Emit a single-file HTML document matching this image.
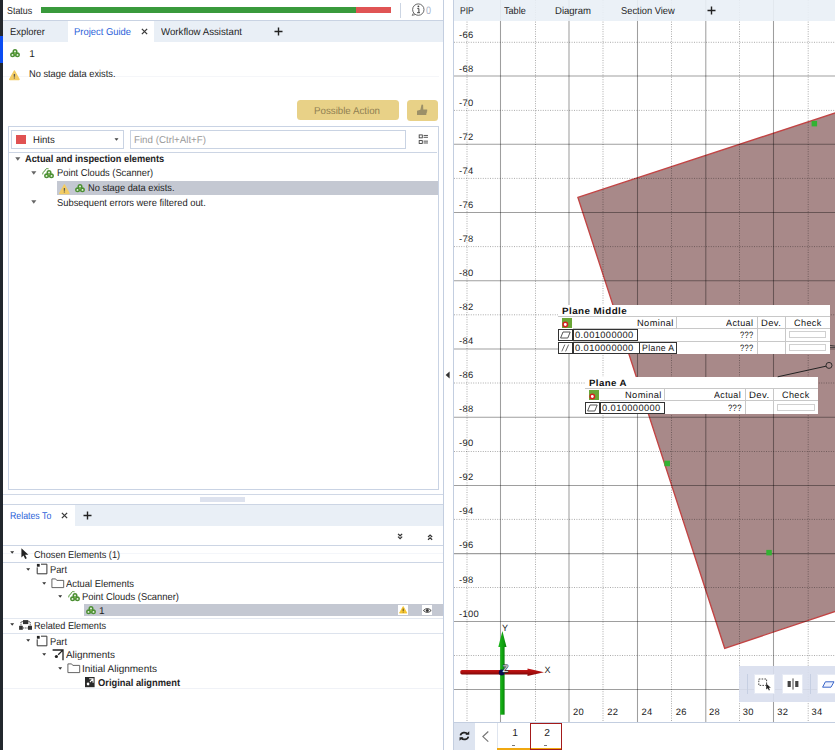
<!DOCTYPE html>
<html>
<head>
<meta charset="utf-8">
<style>
html,body{margin:0;padding:0;}
body{width:835px;height:750px;overflow:hidden;background:#fff;position:relative;font-family:"Liberation Sans",sans-serif;font-size:10px;color:#1e1e1e;text-rendering:geometricPrecision;}
.a{position:absolute;}
.t{position:absolute;white-space:nowrap;line-height:14px;height:14px;margin-top:1px;z-index:2;}
.hl{position:absolute;height:1px;}
.vl{position:absolute;width:1px;}
.b{font-weight:bold;}
.blue{color:#2b62d9;}
svg{position:absolute;overflow:visible;z-index:2;}
.lab{position:absolute;white-space:nowrap;margin-top:1px;letter-spacing:0.3px;font-size:9.4px;line-height:12px;height:12px;color:#1a1a1a;}
.an{position:absolute;white-space:nowrap;font-size:9.2px;line-height:12px;height:12px;color:#111;letter-spacing:0.4px;}
</style>
</head>
<body>
<svg width="0" height="0" style="left:0;top:0;"><defs>
<g id="cl"><g fill="#4b8f33"><circle cx="5" cy="2.6" r="2.5"/><circle cx="2.6" cy="5.8" r="2.5"/><circle cx="7.4" cy="5.8" r="2.5"/></g><g fill="#eef6e6"><circle cx="5" cy="2.5" r="0.95"/><circle cx="2.5" cy="5.9" r="0.95"/><circle cx="7.5" cy="5.9" r="0.95"/></g><circle cx="5" cy="4.7" r="0.8" fill="#86c04e"/></g>
<g id="warn"><path d="M5.4 1 L10 9.4 H0.8 Z" fill="#f3cc63" stroke="#f3cc63" stroke-width="1.5" stroke-linejoin="round"/><path d="M5.4 3.9 V6.7 M5.4 7.4 V8.4" stroke="#5e5a50" stroke-width="1.3"/></g>
</defs></svg>
<!-- LEFT EDGE STRIP -->
<div class="a" style="left:0;top:0;width:2.7px;height:750px;background:#22272d;"></div>
<div class="a" style="left:0;top:36.4px;width:2.7px;height:27px;background:#0a4cf2;"></div>

<!-- STATUS ROW -->
<div class="t" id="tStatus" style="left:7.4px;top:4px;transform-origin:0 50%;transform:scaleX(0.889);">Status</div>
<div class="a" style="left:41px;top:7px;width:314.6px;height:5.9px;background:#399a3c;"></div>
<div class="a" style="left:355.6px;top:7px;width:35.4px;height:5.9px;background:#e05454;"></div>
<div class="vl" style="left:400px;top:3px;height:15px;background:#ccd5e3;"></div>
<svg style="left:410px;top:2px;" width="18" height="16" viewBox="0 0 18 16"><circle cx="8.3" cy="7.6" r="5.7" fill="#fff" stroke="#555" stroke-width="0.9"/><path d="M3.4 11.2 L2.2 13.4 L5 12.6" fill="#fff" stroke="#555" stroke-width="0.8"/><circle cx="8.4" cy="4.4" r="0.9" fill="#444"/><path d="M7.3 6.6 H8.9 V10.6 M7.1 10.7 H10" fill="none" stroke="#444" stroke-width="1"/></svg>
<div class="t" style="left:426.3px;top:3px;color:#a9b3c8;font-size:10.6px;transform:scaleX(0.85);transform-origin:0 50%;">0</div>
<div class="hl" style="left:3px;top:20px;width:441px;background:#c9d3e3;"></div>

<!-- TOP TAB STRIP -->
<div class="a" style="left:3px;top:21px;width:440px;height:21px;background:#e9eff6;"></div>
<div class="a" style="left:67.6px;top:21px;width:86.9px;height:21px;background:#fff;"></div>
<div class="t" id="tExplorer" style="left:9.5px;top:25px;transform-origin:0 50%;transform:scaleX(0.937);">Explorer</div>
<div class="t blue" id="tPG" style="left:74px;top:25px;transform-origin:0 50%;transform:scaleX(0.941);">Project Guide</div>
<svg style="left:140.6px;top:28.2px;" width="7" height="7" viewBox="0 0 8 8"><path d="M1 1 L7 7 M7 1 L1 7" stroke="#3a3a3a" stroke-width="1.5" fill="none"/></svg>
<div class="t" id="tWA" style="left:161px;top:25px;transform-origin:0 50%;transform:scaleX(0.967);">Workflow Assistant</div>
<svg style="left:274px;top:27px;" width="9" height="9" viewBox="0 0 9 9"><path d="M4.5 0.5 V8.5 M0.5 4.5 H8.5" stroke="#222" stroke-width="1.4" fill="none"/></svg>

<!-- PROJECT GUIDE CONTENT -->
<svg class="cl" style="left:10.2px;top:48.5px;" width="11" height="9"><use href="#cl"/></svg>
<div class="t" style="left:29.3px;top:47px;">1</div>
<svg class="wn" style="left:9px;top:69.7px;" width="11" height="11"><use href="#warn"/></svg>
<div class="t" id="tNo1" style="left:29px;top:67px;transform-origin:0 50%;transform:scaleX(0.926);">No stage data exists.</div>
<div class="hl" style="left:3px;top:76px;width:436px;background:#f5f6f9;"></div>

<!-- BUTTONS -->
<div class="a" style="left:296.6px;top:100px;width:102.6px;height:20px;border-radius:3.5px;background:#e8d187;"></div>
<div class="t" id="tPA" style="left:314px;top:104px;color:#8f7f52;transform-origin:0 50%;transform:scaleX(0.973);">Possible Action</div>
<div class="a" style="left:407.4px;top:100px;width:30.7px;height:21px;border-radius:3.5px;background:#e8d187;"></div>
<svg style="left:410px;top:100px;" width="24" height="20" viewBox="410 100 24 20"><path d="M417 110.8 L420.4 109.7 L421.5 104.8 Q422.3 104.3 423.1 104.9 L423.3 109.4 H427.2 V111.5 H426.8 V113.2 H426.3 V114.9 H417 Z" fill="#9c9068"/></svg>

<!-- HINTS FRAME -->
<div class="a" style="left:8px;top:126px;width:430.6px;height:363.6px;border:1px solid #c9d3e4;box-sizing:border-box;"></div>
<div class="a" style="left:11px;top:130px;width:113px;height:19px;border:1px solid #c9d3e3;box-sizing:border-box;"></div>
<div class="a" style="left:16px;top:135px;width:10px;height:9px;background:#e05252;"></div>
<div class="t" id="tHints" style="left:32.7px;top:133px;transform-origin:0 50%;transform:scaleX(0.956);">Hints</div>
<svg style="left:114.3px;top:137.5px;" width="5" height="3" viewBox="0 0 6 4"><path d="M0.3 0.3 H5.7 L3 3.6 Z" fill="#444"/></svg>
<div class="a" style="left:130px;top:130px;width:276px;height:19px;border:1px solid #c9d3e3;box-sizing:border-box;"></div>
<div class="t" id="tFind" style="left:134px;top:133px;color:#9a9a9a;transform-origin:0 50%;transform:scaleX(0.974);">Find (Ctrl+Alt+F)</div>
<svg style="left:418.4px;top:134.2px;" width="11.5" height="11" viewBox="0 0 12 12"><g fill="none" stroke="#333" stroke-width="0.9"><rect x="1" y="1" width="3.4" height="3.2"/><rect x="1" y="7.2" width="3.4" height="3.2"/><path d="M5.8 1.6 H10.6 M5.8 3.6 H10.6 M5.8 7.8 H10.6 M5.8 9.8 H10.6"/></g></svg>
<div class="hl" style="left:9px;top:152px;width:428px;background:#ccd5e4;"></div>

<!-- HINTS TREE -->
<svg style="left:15px;top:156.8px;" width="5.6" height="4" viewBox="0 0 7 5"><path d="M0.3 0.3 H6.7 L3.5 4.6 Z" fill="#666"/></svg>
<div class="t b" id="tAct" style="left:25px;top:152px;transform-origin:0 50%;transform:scaleX(0.928);">Actual and inspection elements</div>
<svg style="left:30.6px;top:171px;" width="5.6" height="4" viewBox="0 0 7 5"><path d="M0.3 0.3 H6.7 L3.5 4.6 Z" fill="#666"/></svg>
<svg class="cl" style="left:44px;top:170px;" width="11" height="9"><use href="#cl"/><path d="M-1.3 4.4 A3 3 0 0 1 0.8 1.1 A3 3 0 0 1 4.6 -1.2" fill="none" stroke="#5a9a40" stroke-width="1"/></svg>
<div class="t" id="tPC1" style="left:57.4px;top:166px;transform-origin:0 50%;transform:scaleX(0.930);">Point Clouds (Scanner)</div>
<div class="a" style="left:57.3px;top:181px;width:380.7px;height:13.7px;background:#c4c8d2;"></div>
<svg class="wn" style="left:58.8px;top:183.5px;" width="11" height="11"><use href="#warn"/></svg>
<svg class="cl" style="left:74.7px;top:183.6px;" width="11" height="9"><use href="#cl"/></svg>
<div class="t" id="tNo2" style="left:87.7px;top:181px;transform-origin:0 50%;transform:scaleX(0.926);">No stage data exists.</div>
<svg style="left:30.6px;top:199.8px;" width="5.6" height="4" viewBox="0 0 7 5"><path d="M0.3 0.3 H6.7 L3.5 4.6 Z" fill="#666"/></svg>
<div class="t" id="tSub" style="left:57.2px;top:196px;transform-origin:0 50%;transform:scaleX(0.936);">Subsequent errors were filtered out.</div>

<!-- SPLITTER -->
<div class="hl" style="left:3px;top:494px;width:441px;background:#d0d8e6;"></div>
<div class="a" style="left:200px;top:497px;width:45px;height:5px;background:#dde2ee;"></div>
<div class="hl" style="left:3px;top:504px;width:441px;background:#ccd5e4;"></div>

<!-- RELATES TO -->
<div class="a" style="left:3px;top:505px;width:440px;height:21px;background:#e9eff6;"></div>
<div class="a" style="left:3px;top:505px;width:72px;height:21px;background:#fff;"></div>
<div class="t blue" id="tRel" style="left:9.7px;top:509px;transform-origin:0 50%;transform:scaleX(0.877);">Relates To</div>
<svg style="left:61.2px;top:512.2px;" width="7" height="7" viewBox="0 0 8 8"><path d="M1 1 L7 7 M7 1 L1 7" stroke="#3a3a3a" stroke-width="1.5" fill="none"/></svg>
<svg style="left:83px;top:511px;" width="9" height="9" viewBox="0 0 9 9"><path d="M4.5 0.5 V8.5 M0.5 4.5 H8.5" stroke="#222" stroke-width="1.4" fill="none"/></svg>
<svg style="left:397.2px;top:533px;" width="6.2" height="6.6" viewBox="0 0 7 8"><path d="M1 1 L3.5 3.4 L6 1 M1 4.4 L3.5 6.8 L6 4.4" stroke="#333" stroke-width="1.5" fill="none"/></svg>
<svg style="left:427.1px;top:533.6px;" width="6.2" height="6.6" viewBox="0 0 7 8"><path d="M1 3.6 L3.5 1.2 L6 3.6 M1 7 L3.5 4.6 L6 7" stroke="#333" stroke-width="1.5" fill="none"/></svg>
<div class="hl" style="left:3px;top:545px;width:440px;background:#ccd5e4;"></div>
<div class="hl" style="left:3px;top:553px;width:440px;background:#f4f6fa;"></div><div class="hl" style="left:3px;top:561.8px;width:440px;background:#cdd6e5;"></div>
<div class="hl" style="left:3px;top:617.5px;width:440px;background:#e3e8f0;"></div>
<div class="hl" style="left:3px;top:632.5px;width:440px;background:#dde3ed;"></div>
<div class="hl" style="left:3px;top:688px;width:440px;background:#f0f2f7;"></div>

<!-- relates tree -->
<svg style="left:9.6px;top:550.5px;" width="4.4" height="2.8" viewBox="0 0 6 4"><path d="M0.2 0.2 H5.8 L3 3.8 Z" fill="#333"/></svg>
<svg style="left:21.4px;top:547.8px;" width="8" height="11.2" viewBox="0 0 8 11.2"><path d="M0.4 0.2 V9.4 L2.5 7.4 L4.2 11 L5.8 10.3 L4.1 6.8 H7.4 Z" fill="#222"/></svg>
<div class="t" id="tCh" style="left:34px;top:548px;transform-origin:0 50%;transform:scaleX(0.916);">Chosen Elements (1)</div>
<svg style="left:25.7px;top:567.6px;" width="4.4" height="2.8" viewBox="0 0 6 4"><path d="M0.2 0.2 H5.8 L3 3.8 Z" fill="#333"/></svg><svg style="left:35.5px;top:563.2px;" width="12" height="12" viewBox="0 0 12 12"><path d="M1.2 4.4 V10.8 H10.9 V1.2 H5" fill="none" stroke="#333" stroke-width="1"/><rect x="0.9" y="0.9" width="2.8" height="2.8" fill="#222"/></svg>
<div class="t" id="tPart1" style="left:50px;top:563px;transform-origin:0 50%;transform:scaleX(0.927);">Part</div>
<svg style="left:41.6px;top:581.5px;" width="4.4" height="2.8" viewBox="0 0 6 4"><path d="M0.2 0.2 H5.8 L3 3.8 Z" fill="#333"/></svg><svg style="left:50.9px;top:578.2px;" width="14" height="11" viewBox="0 0 14 11"><path d="M0.9 0.9 H4.6 L5.8 2.4 H12.7 V9.6 H0.9 Z" fill="#fff" stroke="#555" stroke-width="0.9"/></svg>
<div class="t" id="tAE" style="left:66px;top:577px;transform-origin:0 50%;transform:scaleX(0.941);">Actual Elements</div>
<svg style="left:57.7px;top:595px;" width="4.4" height="2.8" viewBox="0 0 6 4"><path d="M0.2 0.2 H5.8 L3 3.8 Z" fill="#333"/></svg>
<svg class="cl" style="left:69.9px;top:592.8px;" width="11" height="9"><use href="#cl"/><path d="M-1.3 4.4 A3 3 0 0 1 0.8 1.1 A3 3 0 0 1 4.6 -1.2" fill="none" stroke="#5a9a40" stroke-width="1"/></svg>
<div class="t" id="tPC2" style="left:82px;top:590px;transform-origin:0 50%;transform:scaleX(0.938);">Point Clouds (Scanner)</div>
<div class="a" style="left:83.6px;top:603.9px;width:359.4px;height:12.6px;background:#c4c8d2;"></div>
<svg class="cl" style="left:85.9px;top:605.7px;" width="11" height="9"><use href="#cl"/></svg>
<div class="t" style="left:99px;top:604px;">1</div>
<div class="a" style="left:397.7px;top:604.7px;width:10.5px;height:10.4px;background:#fff;"></div>
<svg style="left:398.7px;top:606.3px;" width="8.4" height="7.6" viewBox="0 0 8.4 7.6"><path d="M4.2 0.5 L7.9 7.1 H0.5 Z" fill="#f5c532" stroke="#f5c532" stroke-width="0.8" stroke-linejoin="round"/><path d="M4.2 2.6 V5 M4.2 5.7 V6.5" stroke="#5a4a20" stroke-width="1"/></svg>
<div class="a" style="left:422px;top:604.7px;width:10.1px;height:10.4px;background:#fff;"></div>
<svg style="left:422.8px;top:607.6px;" width="8.6" height="5" viewBox="0 0 8.6 5"><path d="M0.4 2.5 Q4.3 -1.4 8.2 2.5 Q4.3 6.4 0.4 2.5 Z" fill="#fff" stroke="#333" stroke-width="0.9"/><circle cx="4.3" cy="2.5" r="1.5" fill="#333"/></svg>
<svg style="left:9.6px;top:622.8px;" width="4.4" height="2.8" viewBox="0 0 6 4"><path d="M0.2 0.2 H5.8 L3 3.8 Z" fill="#333"/></svg>
<svg style="left:19px;top:620.4px;" width="13.2" height="10" viewBox="0 0 13.2 10"><g fill="#333"><rect x="4" y="0.1" width="5.3" height="4"/><rect x="0.1" y="5.8" width="3.7" height="4"/><rect x="9" y="5.8" width="4" height="4"/></g><path d="M3.8 1.6 H2 V5.6 M9.4 1.6 H11.2 V5.6 M4 8 H9" stroke="#333" stroke-width="0.9" fill="none" stroke-dasharray="1.3 0.9"/></svg>
<div class="t" id="tRE" style="left:34px;top:619px;transform-origin:0 50%;transform:scaleX(0.912);">Related Elements</div>
<svg style="left:25.7px;top:639.4px;" width="4.4" height="2.8" viewBox="0 0 6 4"><path d="M0.2 0.2 H5.8 L3 3.8 Z" fill="#333"/></svg><svg style="left:35.5px;top:634.6px;" width="12" height="12" viewBox="0 0 12 12"><path d="M1.2 4.4 V10.8 H10.9 V1.2 H5" fill="none" stroke="#333" stroke-width="1"/><rect x="0.9" y="0.9" width="2.8" height="2.8" fill="#222"/></svg>
<div class="t" id="tPart2" style="left:50px;top:635px;transform-origin:0 50%;transform:scaleX(0.927);">Part</div>
<svg style="left:41.6px;top:652.9px;" width="4.4" height="2.8" viewBox="0 0 6 4"><path d="M0.2 0.2 H5.8 L3 3.8 Z" fill="#333"/></svg>
<svg style="left:52px;top:648.6px;" width="12" height="12" viewBox="0 0 12 12"><path d="M0.6 1 H11 V11.2 M10.6 1.4 L6.2 5.8" fill="none" stroke="#222" stroke-width="1.3"/><circle cx="4.4" cy="7.5" r="1.6" fill="#222"/></svg>
<div class="t" id="tAl" style="left:66px;top:648px;transform-origin:0 50%;transform:scaleX(0.991);">Alignments</div>
<svg style="left:57.7px;top:667px;" width="4.4" height="2.8" viewBox="0 0 6 4"><path d="M0.2 0.2 H5.8 L3 3.8 Z" fill="#333"/></svg><svg style="left:67.1px;top:662.8px;" width="14" height="11" viewBox="0 0 14 11"><path d="M0.9 0.9 H4.6 L5.8 2.4 H12.7 V9.6 H0.9 Z" fill="#fff" stroke="#555" stroke-width="0.9"/></svg>
<div class="t" id="tIA" style="left:82px;top:662px;transform-origin:0 50%;transform:scaleX(0.999);">Initial Alignments</div>
<svg style="left:85.3px;top:676.6px;" width="9.6" height="10.2" viewBox="0 0 10 10" preserveAspectRatio="none"><rect x="0" y="0" width="10" height="10" fill="#2a2a2a"/><path d="M4.4 1.7 H8.4 V5.6 M8.2 1.9 L5.2 4.9" stroke="#fff" stroke-width="1.1" fill="none"/><circle cx="3.2" cy="6.9" r="1.4" fill="#fff"/></svg>
<div class="t b" id="tOA" style="left:98px;top:676px;transform-origin:0 50%;transform:scaleX(0.934);">Original alignment</div>

<!-- PANEL BORDERS -->
<div class="vl" style="left:443px;top:0;height:750px;background:#c3cee0;"></div>
<svg style="left:445px;top:371px;" width="5" height="8" viewBox="0 0 5 8"><path d="M4.6 0.4 V7.6 L0.6 4 Z" fill="#333"/></svg>
<div class="vl" style="left:453px;top:0;height:750px;background:#c3cee0;"></div>

<!-- VIEWPORT -->
<div id="vp" class="a" style="left:454px;top:0;width:381px;height:722px;overflow:hidden;background:#fff;">
<svg id="vpsvg" style="left:0;top:0;z-index:0;" width="381" height="722" viewBox="454 0 381 722">
<polygon points="577.9,197.4 836.5,112.5 836.5,611 724.7,648.3" fill="#a88989" stroke="#c24444" stroke-width="1.35"/>
<g id="grid"><g stroke="#000" stroke-opacity="0.38" stroke-width="1.05"><path d="M500.5 0 V722"/><path d="M569.0 0 V722"/><path d="M637.5 0 V722"/><path d="M705.8 0 V722"/><path d="M773.5 0 V722"/><path d="M454 76.0 H835"/><path d="M454 144.3 H835"/><path d="M454 212.5 H835"/><path d="M454 280.7 H835"/><path d="M454 348.9 H835"/><path d="M454 417.2 H835"/><path d="M454 485.4 H835"/><path d="M454 553.6 H835"/><path d="M454 621.4 H835"/><path d="M454 689.5 H835"/></g><g stroke="#000" stroke-opacity="0.33" stroke-width="1" stroke-dasharray="1 1.4"><path d="M467.0 0 V722"/><path d="M535.5 0 V722"/><path d="M603.0 0 V722"/><path d="M671.5 0 V722"/><path d="M739.5 0 V722"/><path d="M808.2 0 V722"/><path d="M454 42.3 H835"/><path d="M454 110.4 H835"/><path d="M454 178.4 H835"/><path d="M454 246.6 H835"/><path d="M454 314.8 H835"/><path d="M454 383.0 H835"/><path d="M454 451.5 H835"/><path d="M454 519.4 H835"/><path d="M454 587.5 H835"/><path d="M454 655.5 H835"/></g></g><!--/grid--><g fill="#33b233" id="gsq"><rect x="811.6" y="120.9" width="5.5" height="5.5"/><rect x="664.4" y="460.7" width="5.6" height="5.5"/><rect x="766.3" y="549.9" width="5.5" height="5.5"/></g>
</svg>
</div>

<!--labs--><div class="lab" id="ly0" style="left:459px;top:28px;">-66</div>
<div class="lab" id="ly1" style="left:459px;top:62px;">-68</div>
<div class="lab" id="ly2" style="left:459px;top:96px;">-70</div>
<div class="lab" id="ly3" style="left:459px;top:130px;">-72</div>
<div class="lab" id="ly4" style="left:459px;top:164px;">-74</div>
<div class="lab" id="ly5" style="left:459px;top:198px;">-76</div>
<div class="lab" id="ly6" style="left:459px;top:232px;">-78</div>
<div class="lab" id="ly7" style="left:459px;top:266px;">-80</div>
<div class="lab" id="ly8" style="left:459px;top:300px;">-82</div>
<div class="lab" id="ly9" style="left:459px;top:334px;">-84</div>
<div class="lab" id="ly10" style="left:459px;top:368px;">-86</div>
<div class="lab" id="ly11" style="left:459px;top:402px;">-88</div>
<div class="lab" id="ly12" style="left:459px;top:436px;">-90</div>
<div class="lab" id="ly13" style="left:459px;top:470px;">-92</div>
<div class="lab" id="ly14" style="left:459px;top:504px;">-94</div>
<div class="lab" id="ly15" style="left:459px;top:538px;">-96</div>
<div class="lab" id="ly16" style="left:459px;top:573px;">-98</div>
<div class="lab" id="ly17" style="left:459px;top:607px;">-100</div>
<div class="lab" id="lx0" style="left:573px;top:705px;">20</div>
<div class="lab" id="lx1" style="left:607.3px;top:705px;">22</div>
<div class="lab" id="lx2" style="left:641.5px;top:705px;">24</div>
<div class="lab" id="lx3" style="left:675.7px;top:705px;">26</div>
<div class="lab" id="lx4" style="left:708.9px;top:705px;">28</div>
<div class="lab" id="lx5" style="left:742.8px;top:705px;">30</div>
<div class="lab" id="lx6" style="left:777.3px;top:705px;">32</div>
<div class="lab" id="lx7" style="left:811.6px;top:705px;">34</div><!--/labs-->
<!-- viewport tab bar -->
<div class="a" style="left:454px;top:0;width:381px;height:21px;background:rgba(233,239,246,0.9);"></div>
<div class="t" id="vPIP" style="left:460.3px;top:4px;transform-origin:0 50%;transform:scaleX(0.850);">PIP</div>
<div class="t" id="vTable" style="left:503.9px;top:4px;transform-origin:0 50%;transform:scaleX(0.908);">Table</div>
<div class="t" id="vDiag" style="left:555.4px;top:4px;transform-origin:0 50%;transform:scaleX(0.952);">Diagram</div>
<div class="t" id="vSec" style="left:621.2px;top:4px;transform-origin:0 50%;transform:scaleX(0.933);">Section View</div>
<svg style="left:706.5px;top:5.5px;" width="9" height="9" viewBox="0 0 9 9"><path d="M4.5 0.5 V8.5 M0.5 4.5 H8.5" stroke="#222" stroke-width="1.4" fill="none"/></svg>

<!-- annotation: Plane Middle -->
<div class="a" style="left:557.5px;top:305px;width:272.5px;height:49px;background:#fff;"></div>
<div class="hl" style="left:557.5px;top:316px;width:272.5px;background:#c8c8c8;"></div>
<div class="hl" style="left:573px;top:328px;width:257px;background:#c8c8c8;"></div>
<div class="hl" style="left:573px;top:341px;width:257px;background:#c8c8c8;"></div>
<div class="vl" style="left:676px;top:317px;height:12px;background:#c8c8c8;"></div>
<div class="vl" style="left:757px;top:317px;height:37px;background:#c8c8c8;"></div>
<div class="vl" style="left:785px;top:317px;height:37px;background:#c8c8c8;"></div>
<div class="an b" id="pmT" style="left:561.7px;top:305px;transform-origin:0 50%;transform:scaleX(1.069);">Plane Middle</div>
<div class="a" style="left:562px;top:317.5px;width:10px;height:10px;background:#6aa636;"></div>
<svg style="left:562px;top:321px;" width="7" height="7" viewBox="0 0 7 7"><circle cx="3.3" cy="3.5" r="2.2" fill="#fff" stroke="#d42020" stroke-width="1.5"/></svg>
<div class="an" id="pmNom" style="left:636.8px;top:317px;transform-origin:0 50%;transform:scaleX(1.008);">Nominal</div>
<div class="an" id="pmAct" style="left:726px;top:317px;transform-origin:0 50%;transform:scaleX(0.981);">Actual</div>
<div class="an" id="pmDev" style="left:761.2px;top:317px;transform-origin:0 50%;transform:scaleX(1.025);">Dev.</div>
<div class="an" id="pmChk" style="left:793.7px;top:317px;transform-origin:0 50%;transform:scaleX(0.988);">Check</div>
<div class="a" style="left:558px;top:329px;width:15px;height:12px;border:1px solid #333;box-sizing:border-box;"></div>
<svg style="left:560px;top:331px;" width="11" height="8" viewBox="0 0 11 8"><path d="M3 1 H10.2 L7.8 7 H0.6 Z" fill="none" stroke="#444" stroke-width="0.9"/></svg>
<div class="a" style="left:573px;top:329px;width:65px;height:12px;border:1px solid #333;box-sizing:border-box;"></div>
<div class="an" id="pmV1" style="left:574.8px;top:329px;transform-origin:0 50%;transform:scaleX(1.011);">0.001000000</div>
<div class="an" id="pmQ1" style="left:739.5px;top:329px;transform-origin:0 50%;transform:scaleX(0.811);">???</div>
<div class="a" style="left:789px;top:331px;width:37px;height:7px;border:1px solid #d0d0d0;box-sizing:border-box;"></div>
<div class="a" style="left:558px;top:341.5px;width:15px;height:12.5px;border:1px solid #333;box-sizing:border-box;"></div>
<svg style="left:561px;top:344px;" width="9" height="8" viewBox="0 0 9 8"><path d="M0.8 7.4 L3.8 0.6 M4.6 7.4 L7.6 0.6" fill="none" stroke="#555" stroke-width="0.9"/></svg>
<div class="a" style="left:573px;top:341.5px;width:104px;height:12.5px;border:1px solid #333;box-sizing:border-box;"></div>
<div class="vl" style="left:639px;top:343px;height:10px;background:#333;"></div>
<div class="an" id="pmV2" style="left:574.8px;top:342px;transform-origin:0 50%;transform:scaleX(1.011);">0.010000000</div>
<div class="an" id="pmPA" style="left:642px;top:342px;transform-origin:0 50%;transform:scaleX(0.942);">Plane A</div>
<div class="an" id="pmQ2" style="left:739.5px;top:342px;transform-origin:0 50%;transform:scaleX(0.811);">???</div>
<div class="a" style="left:789px;top:343.5px;width:37px;height:7.5px;border:1px solid #d0d0d0;box-sizing:border-box;"></div>

<!-- annotation: Plane A -->
<div class="a" style="left:585px;top:377px;width:232.5px;height:37.2px;background:#fff;"></div>
<div class="hl" style="left:585px;top:388px;width:232.5px;background:#c8c8c8;"></div>
<div class="hl" style="left:600px;top:400px;width:217.5px;background:#c8c8c8;"></div>
<div class="vl" style="left:664px;top:389px;height:12px;background:#c8c8c8;"></div>
<div class="vl" style="left:745px;top:389px;height:25px;background:#c8c8c8;"></div>
<div class="vl" style="left:773px;top:389px;height:25px;background:#c8c8c8;"></div>
<div class="an b" id="paT" style="left:589px;top:377px;transform-origin:0 50%;transform:scaleX(1.051);">Plane A</div>
<div class="a" style="left:588.5px;top:389.5px;width:10px;height:10px;background:#6aa636;"></div>
<svg style="left:588.5px;top:393px;" width="7" height="7" viewBox="0 0 7 7"><circle cx="3.3" cy="3.5" r="2.2" fill="#fff" stroke="#d42020" stroke-width="1.5"/></svg>
<div class="an" id="paNom" style="left:624.6px;top:389px;transform-origin:0 50%;transform:scaleX(1.008);">Nominal</div>
<div class="an" id="paAct" style="left:714.4px;top:389px;transform-origin:0 50%;transform:scaleX(0.966);">Actual</div>
<div class="an" id="paDev" style="left:749.3px;top:389px;transform-origin:0 50%;transform:scaleX(1.045);">Dev.</div>
<div class="an" id="paChk" style="left:782px;top:389px;transform-origin:0 50%;transform:scaleX(0.984);">Check</div>
<div class="a" style="left:585px;top:401.5px;width:15px;height:12px;border:1px solid #333;box-sizing:border-box;"></div>
<svg style="left:587px;top:403.5px;" width="11" height="8" viewBox="0 0 11 8"><path d="M3 1 H10.2 L7.8 7 H0.6 Z" fill="none" stroke="#444" stroke-width="0.9"/></svg>
<div class="a" style="left:600px;top:401.5px;width:64.5px;height:12px;border:1px solid #333;box-sizing:border-box;"></div>
<div class="an" id="paV1" style="left:601.7px;top:401.5px;transform-origin:0 50%;transform:scaleX(1.011);">0.010000000</div>
<div class="an" id="paQ1" style="left:727.7px;top:401.5px;transform-origin:0 50%;transform:scaleX(0.829);">???</div>
<div class="a" style="left:777px;top:403.5px;width:37.5px;height:7px;border:1px solid #d0d0d0;box-sizing:border-box;"></div>

<!-- coordinate axes -->
<svg style="left:454px;top:620px;" width="120" height="102" viewBox="454 620 120 102">
<defs><linearGradient id="gg" x1="0" x2="1" y1="0" y2="0"><stop offset="0" stop-color="#1cb81c"/><stop offset="0.55" stop-color="#0fa30f"/><stop offset="1" stop-color="#0a7f0a"/></linearGradient>
<linearGradient id="rg" x1="0" x2="0" y1="0" y2="1"><stop offset="0" stop-color="#c41818"/><stop offset="0.5" stop-color="#aa0e0e"/><stop offset="1" stop-color="#7e0808"/></linearGradient></defs>
<path d="M460.2 671.9 Q460.2 670 462 670 H529 V674.4 H462 Q460.2 674.4 460.2 671.9 Z" fill="url(#rg)"/>
<path d="M527.5 668.4 L544 672.2 L527.5 676 Z" fill="url(#rg)"/>
<path d="M500.2 714.7 V646 H504.6 V714.7 Z" fill="url(#gg)"/>
<path d="M498.3 647 L502.4 631 L506.5 647 Z" fill="url(#gg)"/>
<circle cx="501.7" cy="672.5" r="2.9" fill="#0c0c50"/>
</svg>
<div class="lab" style="left:502px;top:620.5px;font-size:9px;color:#222;">Y</div>
<div class="lab" style="left:544.6px;top:663.2px;font-size:9px;color:#222;">X</div>
<div class="lab" style="left:502.6px;top:663.2px;font-size:9.5px;color:#f4f4f4;text-shadow:0.6px 0 0 #333,-0.6px 0 0 #333,0 0.6px 0 #333,0 -0.6px 0 #333;z-index:3;">Z</div>

<!-- viewport toolbar -->
<div class="a" style="left:739px;top:666px;width:96px;height:35.5px;background:rgba(216,222,237,0.9);"></div>
<div class="vl" style="left:746.5px;top:674px;height:20px;background:#c6cfe2;"></div>
<div class="a" style="left:753.9px;top:674.1px;width:21.6px;height:20.4px;background:#fff;border:1px solid #e6eaf4;box-sizing:border-box;"></div>
<svg style="left:758px;top:678px;" width="14" height="13" viewBox="0 0 14 13"><rect x="0.8" y="1" width="7.8" height="6.4" fill="none" stroke="#333" stroke-width="0.9" stroke-dasharray="1.6 1.2"/><path d="M8.2 5.4 V11.6 L9.8 10.2 L10.9 12.6 L11.9 12.1 L10.8 9.8 H12.8 Z" fill="#222"/></svg>
<div class="a" style="left:782.3px;top:674.1px;width:21.2px;height:20.4px;background:#fff;border:1px solid #e6eaf4;box-sizing:border-box;"></div>
<svg style="left:787px;top:678px;" width="12" height="12" viewBox="0 0 12 12"><rect x="0.6" y="3" width="3.2" height="6" fill="#444"/><rect x="8.2" y="3" width="3.2" height="6" fill="#444"/><path d="M6 0.4 V11.6" stroke="#333" stroke-width="0.9"/></svg>
<div class="vl" style="left:810.3px;top:674px;height:20px;background:#c6cfe2;"></div>
<div class="a" style="left:817.4px;top:674.1px;width:21.6px;height:20.4px;background:#fff;border:1px solid #e6eaf4;box-sizing:border-box;"></div>
<svg style="left:822px;top:681px;" width="13" height="7" viewBox="0 0 13 7"><path d="M3.4 0.8 H12 L9 6.2 H0.6 Z" fill="#eef2ff" stroke="#3a66c8" stroke-width="1"/></svg>

<!-- leader lines -->
<svg style="left:770px;top:340px;" width="65" height="40" viewBox="770 340 65 40">
<path d="M777.7 376.8 L826 366.2" stroke="#222" stroke-width="1" fill="none"/>
<circle cx="829" cy="365.4" r="3" fill="none" stroke="#222" stroke-width="0.9"/>
<path d="M830 345.4 L836 346.2 M830 347.4 H836" stroke="#333" stroke-width="0.9" fill="none"/>
</svg>

<!-- bottom bar -->
<div class="hl" style="left:454px;top:722px;width:381px;background:#c3cee0;"></div>
<div class="a" style="left:454px;top:723px;width:381px;height:27px;background:#fff;"></div>
<div class="a" style="left:454px;top:723px;width:21.2px;height:27px;background:#dde4f0;"></div>
<svg style="left:458.8px;top:731.3px;" width="10.8" height="10" viewBox="0 0 12 11"><path d="M1.6 4.9 A4.4 3.8 0 0 1 9.6 3.4 M10.4 6.1 A4.4 3.8 0 0 1 2.4 7.6" fill="none" stroke="#222" stroke-width="1.9"/><path d="M7 4 H11.4 V0.2 Z M5 7 H0.6 V10.8 Z" fill="#222"/></svg>
<svg style="left:482.2px;top:730.6px;" width="7" height="11.2" viewBox="0 0 7 11.2"><path d="M6.3 0.5 L0.9 5.6 L6.3 10.7" fill="none" stroke="#777" stroke-width="1.2"/></svg>
<div class="vl" style="left:497px;top:723px;height:27px;background:#dfe5ef;"></div>
<div class="a" style="left:497px;top:747.8px;width:65px;height:2.2px;background:#f0a810;"></div>
<div class="t" style="left:512.2px;top:726px;font-size:10.2px;">1</div>
<div class="a" style="left:512.2px;top:745px;width:2.6px;height:1px;background:#777;"></div>
<div class="a" style="left:529.5px;top:723.2px;width:32.6px;height:26.4px;border:1.7px solid #a31a1a;box-sizing:border-box;z-index:3;"></div>
<div class="t" style="left:544.2px;top:726px;font-size:10.2px;">2</div>
<div class="a" style="left:544.2px;top:745px;width:2.8px;height:1px;background:#777;z-index:3;"></div>
</body>
</html>
